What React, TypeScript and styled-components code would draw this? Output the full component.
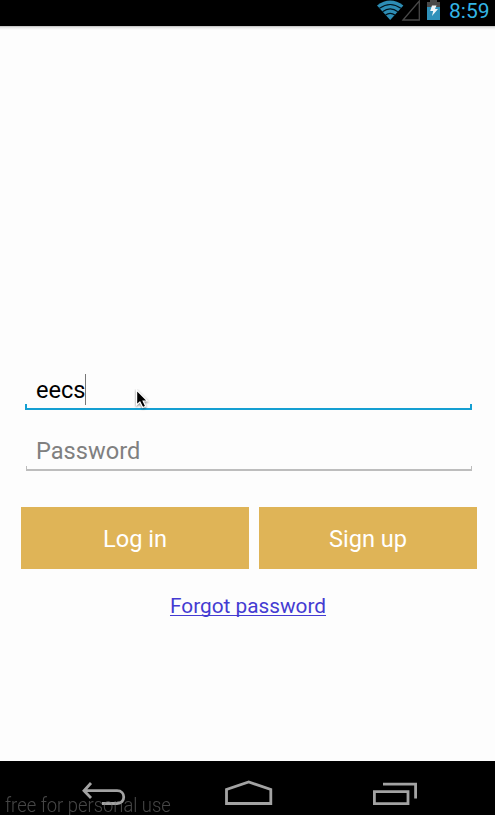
import React from "react";
import styled, { createGlobalStyle } from "styled-components";

const GlobalStyle = createGlobalStyle`
  * { box-sizing: border-box; }
  body { margin: 0; background: #fdfdfd; font-family: Roboto, sans-serif; overflow: hidden; }
`;

const Screen = styled.div`
  position: relative;
  display: flex;
  flex-direction: column;
  width: 495px;
  height: 815px;
  background: #fdfdfd;
`;

const StatusBar = styled.header`
  display: flex;
  flex: none;
  height: 26px;
  background: #000;
`;

const StatusIcons = styled.svg`
  flex: none;
  margin-left: 375px;
`;

const Clock = styled.time`
  margin-left: 4px;
  color: #33b5e5;
  font-size: 21px;
  line-height: 23px;
`;

const BarShadow = styled.div`
  flex: none;
  height: 4px;
  background: linear-gradient(#b9b9b9, #e9e9e9 40%, #fdfdfd);
`;

const Form = styled.main`
  display: flex;
  flex: 1;
  flex-direction: column;
  padding: 342px 18px 0 21px;
`;

const Field = styled.div<{ $active?: boolean }>`
  display: flex;
  flex-direction: column;
  height: ${(p) => (p.$active ? 38 : 37)}px;
  margin: ${(p) => (p.$active ? "0 5px 0 4px" : "24px 5px 0 5px")};
  color: ${(p) => (p.$active ? "#000" : "#808080")};
  font-size: 23.6px;
`;

const Value = styled.div<{ $active?: boolean }>`
  display: flex;
  height: ${(p) => (p.$active ? 32 : 33)}px;
  padding-left: ${(p) => (p.$active ? 11 : 10)}px;
  line-height: ${(p) => (p.$active ? 37 : 34)}px;
`;

const Caret = styled.span`
  width: 1px;
  height: 31px;
  margin: 2px 0 0 -1px;
  background: #777;
`;

const Underline = styled.div<{ $active?: boolean }>`
  height: ${(p) => (p.$active ? 6 : 5)}px;
  margin-top: ${(p) => (p.$active ? 0 : -1)}px;
  border: solid ${(p) => (p.$active ? "#159fd2" : "#bdbdbd")};
  border-width: ${(p) => (p.$active ? "0 2px 2px" : "0 1px 2px")};
`;

const Buttons = styled.div`
  display: grid;
  grid-template-columns: 228px 218px;
  gap: 10px;
  margin-top: 36px;
`;

const Button = styled.button`
  height: 62px;
  padding: 2px 0 0;
  border: 0;
  background: #dfb457;
  color: #fff;
  font: 23.6px Roboto, sans-serif;
`;

const ForgotLink = styled.a`
  align-self: center;
  margin: 24px 2px 0 0;
  color: #443bd2;
  font-size: 20.8px;
  line-height: 26px;
  text-decoration: underline;
  text-decoration-thickness: 1px;
  text-underline-offset: 2px;
  text-decoration-skip-ink: none;
  white-space: nowrap;
`;

const NavBar = styled.nav`
  position: relative;
  display: flex;
  flex: none;
  align-items: flex-start;
  height: 54px;
  padding: 18px 0 0 80px;
  background: #000;
`;

const NavIcon = styled.svg<{ $gap?: number }>`
  flex: none;
  margin-left: ${(p) => p.$gap ?? 0}px;
  fill: none;
  stroke: #a3a3a3;
  stroke-width: 2.8;
`;

const Watermark = styled.span`
  position: absolute;
  left: 5px;
  top: 34px;
  color: rgba(128, 128, 128, 0.55);
  font-size: 21px;
  font-weight: 300;
  line-height: 20px;
  white-space: nowrap;
  transform: scaleX(0.876);
  transform-origin: left;
`;

const Pointer = styled.svg`
  position: absolute;
  left: 134px;
  top: 389px;
`;

export default function App() {
  return (
    <>
      <GlobalStyle />
      <Screen>
        <StatusBar>
          <StatusIcons width="70" height="26" viewBox="0 0 70 26">
            <path d="M2 5.4Q15.2-4.2 28.4 5.4L15.2 20Z" fill="#2d8db5" />
            <g fill="none" stroke="#00131c" strokeWidth="1.2">
              <path d="M4.5 8.2Q15.2.8 25.9 8.2M7.5 11.7Q15.2 6.2 22.9 11.7M10.5 15Q15.2 11.6 19.9 15" />
            </g>
            <path d="M28 20L44.3 1V20Z" fill="none" stroke="#484848" strokeWidth="1.3" />
            <path d="M52 2h3V0h7v2h3v5H52Z" fill="#494949" />
            <path d="M52 7H65V20H52Z" fill="#2f91ba" />
            <path d="M57 5.5h4.5L60 9h3l-6 7 1.2-5H55.2Z" fill="#f1f7fa" />
          </StatusIcons>
          <Clock>8:59</Clock>
        </StatusBar>
        <BarShadow />
        <Form>
          <Field $active>
            <Value $active>eecs<Caret /></Value>
            <Underline $active />
          </Field>
          <Field>
            <Value>Password</Value>
            <Underline />
          </Field>
          <Buttons>
            <Button>Log in</Button>
            <Button>Sign up</Button>
          </Buttons>
          <ForgotLink>Forgot password</ForgotLink>
        </Form>
        <NavBar>
          <NavIcon width="48" height="30" viewBox="0 0 48 30">
            <path d="M11 4L4 11.7L11 19M4 11.7H37C46 11.7 46 24.5 37 24.5H22" />
          </NavIcon>
          <NavIcon $gap={96} width="50" height="30" viewBox="0 0 50 30">
            <path d="M2.5 24.5V10.5L24.7 3L46.8 10.5V24.5Z" />
          </NavIcon>
          <NavIcon $gap={98} width="48" height="30" viewBox="0 0 48 30">
            <path d="M2.4 12.6H36V24.6H2.4ZM11 5.1H43.6V19.5" />
          </NavIcon>
          <Watermark>free for personal use</Watermark>
        </NavBar>
        <Pointer width="16" height="22" viewBox="0 0 16 22">
          <path d="M2.6 1V16L5.9 13L8.7 18.5L11.7 17.2L9.2 12H13.5Z" fill="#000" stroke="#fff" strokeWidth="1.2" filter="drop-shadow(0.5px 1px 1px rgba(0,0,0,.5))" />
        </Pointer>
      </Screen>
    </>
  );
}
